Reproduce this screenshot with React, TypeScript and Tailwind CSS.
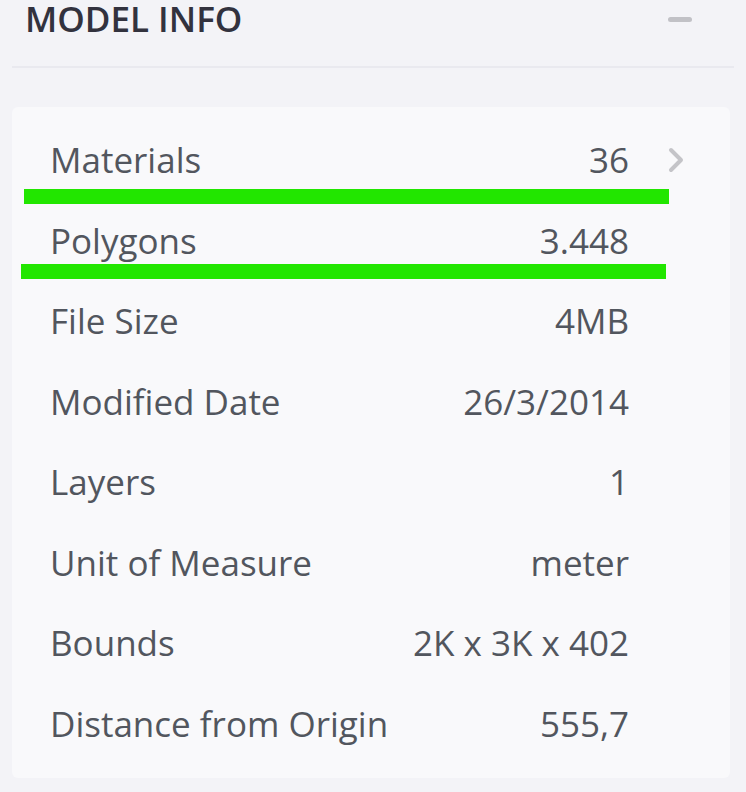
import React from "react";

const rows: { label: string; value: string; chevron?: boolean }[] = [
  { label: "Materials", value: "36", chevron: true },
  { label: "Polygons", value: "3.448" },
  { label: "File Size", value: "4MB" },
  { label: "Modified Date", value: "26/3/2014" },
  { label: "Layers", value: "1" },
  { label: "Unit of Measure", value: "meter" },
  { label: "Bounds", value: "2K x 3K x 402" },
  { label: "Distance from Origin", value: "555,7" },
];

export default function App() {
  return (
    <div
      className="w-[746px] h-[792px] bg-[#f3f3f7] overflow-hidden relative"
      style={{ fontFamily: '"Open Sans", "Noto Sans", sans-serif' }}
    >
      <div className="mx-[12px] h-[68px] border-b-2 border-[#e9e9ef] flex items-start justify-between">
        <h1 className="ml-[13px] mt-[1px] text-[35px] leading-[35px] font-semibold text-[#32323e] whitespace-nowrap">
          MODEL INFO
        </h1>
        <div className="mt-[17px] mr-[42px] w-[24px] h-[5px] rounded-full bg-[#c1c1c6]" />
      </div>
      <div className="mt-[39px] ml-[12px] w-[718px] h-[671px] rounded-[6px] bg-[#f9f9fb] py-[13px] relative">
        {rows.map((r) => (
          <div
            key={r.label}
            className="h-[80.5px] flex items-center pl-[38px] text-[35px] leading-[80px] text-[#52565e] whitespace-nowrap"
          >
            <span>{r.label}</span>
            <span className="ml-auto">{r.value}</span>
            <span className="w-[101px] shrink-0 flex items-center">
              {r.chevron && (
                <svg width="17" height="26" viewBox="0 0 17 26" className="ml-[39px]">
                  <path
                    d="M3 3 L13 13 L3 23"
                    fill="none"
                    stroke="#c4c4c8"
                    strokeWidth="4"
                    strokeLinecap="round"
                    strokeLinejoin="round"
                  />
                </svg>
              )}
            </span>
          </div>
        ))}
        <div className="absolute left-[12px] top-[82px] w-[645px] h-[15px] bg-[#22e600]" />
        <div className="absolute left-[9px] top-[157px] w-[645px] h-[15px] bg-[#22e600]" />
      </div>
    </div>
  );
}
